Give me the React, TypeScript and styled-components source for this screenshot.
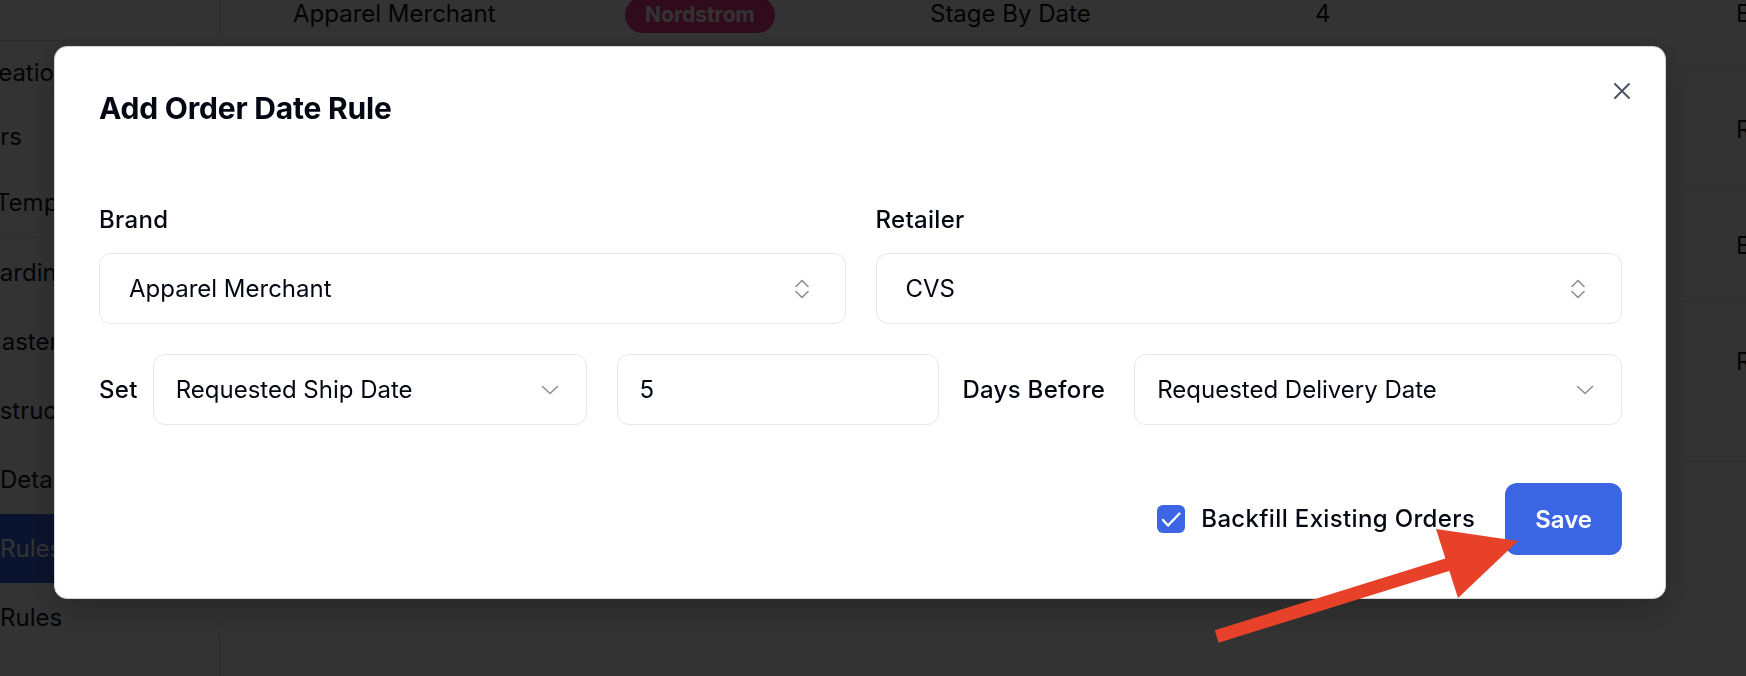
import React from "react";
import styled, { createGlobalStyle } from "styled-components";

const GlobalStyle = createGlobalStyle`
  html, body {
    margin: 0;
    padding: 0;
  }
  body {
    font-family: Inter, "Noto Sans", sans-serif;
    background: #ffffff;
    color: #030712;
    overflow: hidden;
  }
  * {
    box-sizing: border-box;
  }
`;

/* ---------- page behind the dialog ---------- */

const Page = styled.div`
  width: 1746px;
  height: 676px;
  display: flex;
  overflow: hidden;
`;

const Sidebar = styled.nav`
  width: 220px;
  flex-shrink: 0;
  padding-top: 40px;
  border-right: 1px solid #e5e7eb;
  overflow: hidden;
`;

const SideGroup = styled.div`
  width: 176px;
  border-top: 1px solid #e5e7eb;
`;

const NavItem = styled.div<{ $shift?: number; $active?: boolean; $sub?: boolean; $divider?: boolean }>`
  height: ${({ $sub }) => ($sub ? 64 : 69)}px;
  display: flex;
  align-items: center;
  white-space: nowrap;
  font-size: 24px;
  line-height: 36px;
  color: ${({ $active }) => ($active ? "#ffffff" : "#111827")};
  background: ${({ $active }) => ($active ? "#3b65e3" : "transparent")};
  border-bottom: ${({ $divider }) => ($divider ? "1px solid #e5e7eb" : "none")};
  span {
    margin-left: ${({ $shift }) => $shift ?? 0}px;
  }
`;

const Main = styled.main`
  flex: 1;
  min-width: 0;
  overflow: hidden;
`;

const Table = styled.div`
  margin-top: -46px;
`;

const TableRow = styled.div<{ $tall?: boolean }>`
  display: grid;
  grid-template-columns: 332px 305px 385px 421px 1fr;
  align-items: start;
  padding: 42px 0 0 73px;
  height: ${({ $tall }) => ($tall ? 159 : 116)}px;
  border-bottom: 1px solid #e5e7eb;
  font-size: 24px;
  line-height: 36px;
  color: #111111;
  white-space: nowrap;
`;

const Pill = styled.span`
  display: inline-block;
  height: 36px;
  line-height: 36px;
  padding: 0 20px;
  border-radius: 18px;
  background: #ec3a8c;
  color: #ffffff;
  font-size: 21px;
  font-weight: 700;
`;

/* ---------- dialog ---------- */

const Overlay = styled.div`
  position: fixed;
  inset: 0;
  background: rgba(0, 0, 0, 0.8);
  display: flex;
  align-items: flex-start;
  padding: 46px 80px 0 54px;
`;

const Modal = styled.div`
  position: relative;
  flex: 1;
  background: #ffffff;
  border: 1px solid #d1d5db;
  border-radius: 13px;
  padding: 43px 43px 43px 44px;
  box-shadow: 0 12px 32px rgba(0, 0, 0, 0.25);
`;

const Title = styled.h2`
  margin: 0;
  font-size: 30px;
  line-height: 36px;
  font-weight: 700;
  color: #030712;
  letter-spacing: -0.2px;
`;

const CloseButton = styled.button`
  position: absolute;
  top: 35px;
  right: 34px;
  width: 18px;
  height: 18px;
  padding: 0;
  border: none;
  background: none;
  display: flex;
  cursor: pointer;
`;

const Form = styled.div`
  margin-top: 76px;
`;

const TopGrid = styled.div`
  display: grid;
  grid-template-columns: 1fr 1fr;
  column-gap: 30px;
`;

const Field = styled.div`
  display: flex;
  flex-direction: column;
`;

const Label = styled.label`
  font-size: 24px;
  line-height: 36px;
  font-weight: 500;
  letter-spacing: 0.3px;
  color: #030712;
  margin-bottom: 15px;
`;

const InlineLabel = styled.span<{ $ml?: number; $mr?: number }>`
  font-size: 24px;
  line-height: 36px;
  font-weight: 500;
  letter-spacing: 0.3px;
  color: #030712;
  white-space: nowrap;
  margin-left: ${({ $ml }) => $ml ?? 0}px;
  margin-right: ${({ $mr }) => $mr ?? 0}px;
`;

const Box = styled.div<{ $combo?: boolean; $basis?: number; $ml?: number }>`
  height: 71px;
  display: flex;
  align-items: center;
  justify-content: space-between;
  padding: ${({ $combo }) => ($combo ? "0 35px 0 29px" : "0 27px 0 22px")};
  border: 1px solid #e4e7ef;
  border-radius: 12px;
  background: #ffffff;
  font-size: 24px;
  color: #030712;
  flex: ${({ $basis }) => ($basis ? `1 1 ${$basis}px` : "none")};
  min-width: 0;
  margin-left: ${({ $ml }) => $ml ?? 0}px;
  white-space: nowrap;
`;

const NumberInput = styled.input<{ $basis: number; $ml?: number }>`
  height: 71px;
  flex: 1 1 ${({ $basis }) => $basis}px;
  width: ${({ $basis }) => $basis}px;
  min-width: 0;
  margin-left: ${({ $ml }) => $ml ?? 0}px;
  padding: 0 22px;
  border: 1px solid #e4e7ef;
  border-radius: 12px;
  font-family: inherit;
  font-size: 24px;
  color: #030712;
  outline: none;
`;

const FieldRow = styled.div`
  display: flex;
  align-items: center;
  margin-top: 30px;
`;

const Footer = styled.div`
  display: flex;
  justify-content: flex-end;
  align-items: center;
  gap: 30px;
  margin-top: 58px;
`;

const CheckLabel = styled.label`
  display: flex;
  align-items: center;
  gap: 16px;
  font-size: 24px;
  line-height: 36px;
  font-weight: 500;
  letter-spacing: 0.35px;
  color: #030712;
`;

const CheckBox = styled.span`
  width: 28px;
  height: 28px;
  border-radius: 6px;
  background: #3b65e3;
  display: flex;
  align-items: center;
  justify-content: center;
`;

const SaveButton = styled.button`
  height: 72px;
  padding: 0 30px;
  border: none;
  border-radius: 12px;
  background: #3b65e3;
  color: #ffffff;
  font-family: inherit;
  font-size: 24px;
  font-weight: 600;
  cursor: pointer;
`;

const ArrowLayer = styled.svg`
  position: fixed;
  left: 0;
  top: 0;
  pointer-events: none;
`;

/* ---------- icons ---------- */

const UpDownIcon = () => (
  <svg width="16" height="24" viewBox="0 0 16 24" fill="none">
    <path
      d="M2 9.5 L8 3.5 L14 9.5 M2 14.5 L8 20.5 L14 14.5"
      stroke="#8b8f99"
      strokeWidth="1.6"
      strokeLinecap="round"
      strokeLinejoin="round"
    />
  </svg>
);

const ChevronDownIcon = () => (
  <svg width="18" height="10" viewBox="0 0 18 10" fill="none">
    <path
      d="M1.5 1.5 L9 8.5 L16.5 1.5"
      stroke="#8b8f99"
      strokeWidth="1.6"
      strokeLinecap="round"
      strokeLinejoin="round"
    />
  </svg>
);

const CloseIcon = () => (
  <svg width="18" height="18" viewBox="0 0 18 18" fill="none">
    <path d="M2 2 L16 16 M16 2 L2 16" stroke="#4b5563" strokeWidth="2" strokeLinecap="round" />
  </svg>
);

const CheckIcon = () => (
  <svg width="28" height="28" viewBox="0 0 28 28" fill="none">
    <path
      d="M6 15 L11 20.5 L22.5 8.5"
      stroke="#ffffff"
      strokeWidth="2.4"
      strokeLinecap="round"
      strokeLinejoin="round"
    />
  </svg>
);

const rows = [
  { brand: "Apparel Merchant", retailer: "Nordstrom", rule: "Stage By Date", days: "4", field: "Expected Ship Date" },
  { brand: "", retailer: "", rule: "", days: "", field: "Requested Ship Date" },
  { brand: "", retailer: "", rule: "", days: "", field: "Expected Delivery Date" },
  { brand: "", retailer: "", rule: "", days: "", field: "Requested Delivery Date", tall: true },
];

const App = () => {
  return (
    <>
      <GlobalStyle />
      <Page>
        <Sidebar>
          <SideGroup>
            <NavItem $sub $shift={-28}>
              <span>Creation</span>
            </NavItem>
            <NavItem $sub $shift={-76}>
              <span>Retailers</span>
            </NavItem>
          </SideGroup>
          <NavItem $shift={-5} $divider>
            <span>Templates</span>
          </NavItem>
          <NavItem $shift={-62}>
            <span>Onboarding</span>
          </NavItem>
          <NavItem $shift={-20}>
            <span>Masters</span>
          </NavItem>
          <NavItem $shift={-21}>
            <span>Instructions</span>
          </NavItem>
          <NavItem>
            <span>Details</span>
          </NavItem>
          <NavItem $active>
            <span>Rules</span>
          </NavItem>
          <NavItem>
            <span>Rules</span>
          </NavItem>
        </Sidebar>
        <Main>
          <Table>
            {rows.map((r, i) => (
              <TableRow key={i} $tall={r.tall}>
                <div>{r.brand}</div>
                <div>{r.retailer && <Pill>{r.retailer}</Pill>}</div>
                <div>{r.rule}</div>
                <div>{r.days}</div>
                <div>{r.field}</div>
              </TableRow>
            ))}
          </Table>
        </Main>
      </Page>

      <Overlay>
        <Modal>
          <Title>Add Order Date Rule</Title>
          <CloseButton aria-label="Close">
            <CloseIcon />
          </CloseButton>

          <Form>
            <TopGrid>
              <Field>
                <Label>Brand</Label>
                <Box $combo>
                  <span>Apparel Merchant</span>
                  <UpDownIcon />
                </Box>
              </Field>
              <Field>
                <Label>Retailer</Label>
                <Box $combo>
                  <span>CVS</span>
                  <UpDownIcon />
                </Box>
              </Field>
            </TopGrid>

            <FieldRow>
              <InlineLabel $mr={15}>Set</InlineLabel>
              <Box $basis={434}>
                <span>Requested Ship Date</span>
                <ChevronDownIcon />
              </Box>
              <NumberInput $basis={323} $ml={30} defaultValue="5" />
              <InlineLabel $ml={23} $mr={29}>
                Days Before
              </InlineLabel>
              <Box $basis={488}>
                <span>Requested Delivery Date</span>
                <ChevronDownIcon />
              </Box>
            </FieldRow>

            <Footer>
              <CheckLabel>
                <CheckBox>
                  <CheckIcon />
                </CheckBox>
                Backfill Existing Orders
              </CheckLabel>
              <SaveButton>Save</SaveButton>
            </Footer>
          </Form>
        </Modal>
      </Overlay>

      <ArrowLayer width="1746" height="676" viewBox="0 0 1746 676">
        <polygon points="1214.7,630.3 1446.1,558.3 1449.9,570.7 1218.5,642.7" fill="#e8412a" />
        <polygon points="1436,529 1518,541 1458,598" fill="#e8412a" />
      </ArrowLayer>
    </>
  );
};

export default App;
